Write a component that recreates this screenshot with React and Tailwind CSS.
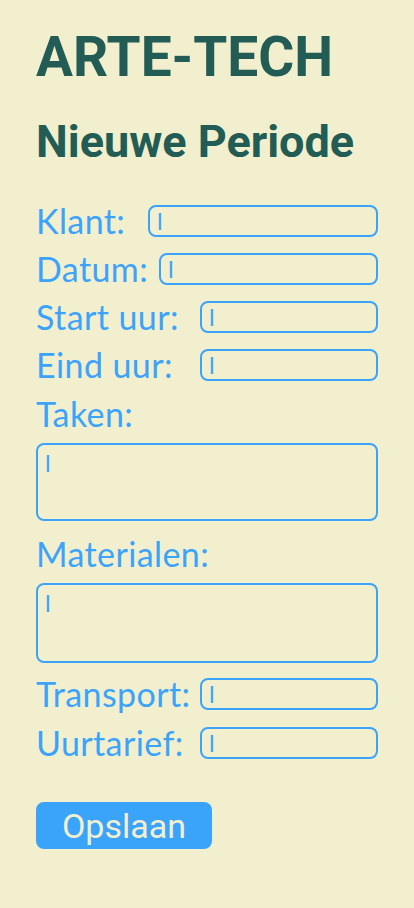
import React from "react";

const blue = "text-[#3ba4fa]";

function Field({ label, labelW, className = "" }) {
  return (
    <div className={`flex h-[32px] items-center ${className}`}>
      <label className={`${labelW} shrink-0 text-[34px] leading-none tracking-[0.4px] ${blue}`}>{label}</label>
      <input
        placeholder="l"
        className="h-[32px] w-0 flex-1 rounded-lg border-2 border-[#3ba4fa] bg-transparent px-[7px] text-[24px] text-[#3ba4fa] outline-none placeholder:text-[#3ba4fa]"
      />
    </div>
  );
}

function Area({ label, h }) {
  return (
    <div className="flex flex-col">
      <label className={`text-[34px] leading-none tracking-[0.4px] ${blue}`}>{label}</label>
      <textarea
        placeholder="l"
        className={`mt-[12px] ${h} resize-none rounded-lg border-2 border-[#3ba4fa] bg-transparent px-[7px] pt-[3px] text-[24px] leading-tight text-[#3ba4fa] outline-none placeholder:text-[#3ba4fa]`}
      />
    </div>
  );
}

export default function App() {
  return (
    <div className="min-h-[908px] bg-[#f2efce] px-[36px] pt-[30px] font-['Lato',sans-serif]">
      <h1 className="font-['Roboto',sans-serif] text-[55px] font-bold leading-none text-[#225c55]">ARTE-TECH</h1>
      <h2 className="mt-[34px] font-['Roboto',sans-serif] text-[45px] font-bold leading-none text-[#225c55]">Nieuwe Periode</h2>

      <form className="mt-[41px] flex flex-col gap-[16px]">
        <Field label="Klant:" labelW="w-[112px]" />
        <Field label="Datum:" labelW="w-[123px]" />
        <Field label="Start uur:" labelW="w-[164px]" />
        <Field label="Eind uur:" labelW="w-[164px]" />
        <Area label="Taken:" h="h-[78px]" />
        <Area label="Materialen:" h="h-[80px]" />
        <Field label="Transport:" labelW="w-[164px]" className="-mt-[1px]" />
        <Field label="Uurtarief:" labelW="w-[164px]" className="mt-[1px]" />
        <div className="mt-[27px]">
          <button
            type="button"
            className="h-[47px] w-[176px] rounded-lg bg-[#3aa3fa] font-['Roboto',sans-serif] text-[34px] leading-none text-[#f2efce]"
          >
            Opslaan
          </button>
        </div>
      </form>
    </div>
  );
}
